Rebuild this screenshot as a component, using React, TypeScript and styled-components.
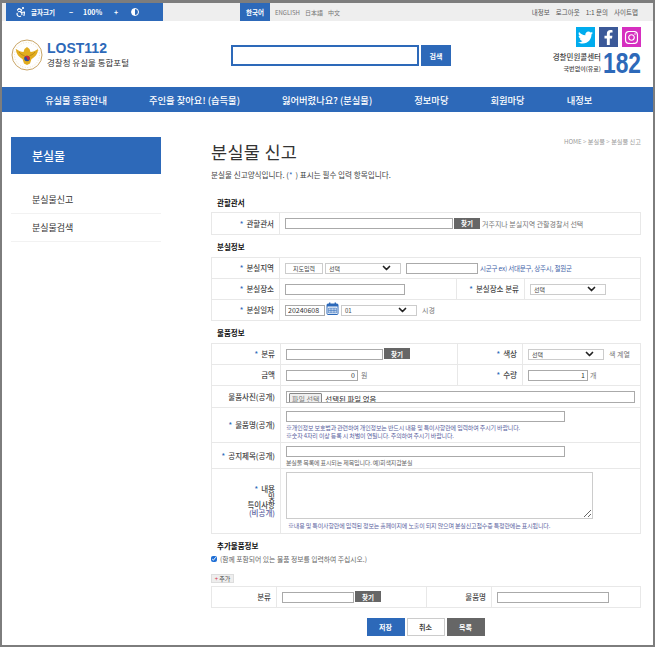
import React from "react";
import styled, { createGlobalStyle } from "styled-components";
import { Accessibility, ChevronDown } from "lucide-react";
import { FaTwitter, FaFacebookF, FaInstagram } from "react-icons/fa";

const GlobalStyle = createGlobalStyle`
  html, body { margin: 0; padding: 0; background: #fff; }
  body {
    font-family: "Noto Sans CJK KR", "Noto Sans", sans-serif;
    font-size: 7.5px;
    color: #333;
  }
  * { box-sizing: border-box; }
`;

const Frame = styled.div`
  width: 655px;
  height: 647px;
  overflow: hidden;
  border: solid #7d7d7d;
  border-width: 3px 2px 2px 2px;
  background: #fff;
`;

const TopBar = styled.div`
  height: 18px;
  background: #eeeeee;
  display: flex;
  align-items: center;
  padding-left: 4px;
`;

const ZoomBox = styled.div`
  width: 157px;
  height: 18px;
  background: #2d69b9;
  color: #fff;
  font-weight: 700;
  display: flex;
  align-items: center;
  padding-left: 9px;
  font-size: 7px;
`;

const ZoomLabel = styled.span`
  margin-left: 4px;
  width: 38px;
  font-size: 6.5px;
  white-space: nowrap;
`;

const ZoomCtl = styled.span<{ $w: number }>`
  width: ${(p) => p.$w}px;
  white-space: nowrap;
`;

const ContrastDot = styled.span`
  width: 8px;
  height: 8px;
  border-radius: 50%;
  border: 1px solid #fff;
  background: linear-gradient(90deg, #fff 50%, transparent 50%);
`;

const LangActive = styled.span`
  margin-left: 77px;
  width: 30px;
  height: 18px;
  background: #2d69b9;
  color: #fff;
  font-weight: 700;
  font-size: 6.5px;
  display: flex;
  align-items: center;
  justify-content: center;
`;

const Lang = styled.span<{ $l: number }>`
  margin-left: ${(p) => p.$l}px;
  color: #777;
  font-size: 6px;
  white-space: nowrap;
`;

const UtilLinks = styled.div`
  margin-left: auto;
  margin-right: 15px;
  display: flex;
  gap: 6px;
  color: #555;
  font-size: 6.5px;
`;

const Header = styled.header`
  height: 66px;
  display: flex;
  padding-left: 9px;
`;

const Logo = styled.div`
  display: flex;
  width: 220px;
  padding-top: 18px;
`;

const LogoText = styled.div`
  margin-left: 4px;
  margin-top: 2px;
`;

const LogoTitle = styled.div`
  font-family: "Liberation Sans", sans-serif;
  font-size: 14px;
  line-height: 15px;
  font-weight: 700;
  color: #2d69b9;
`;

const LogoSub = styled.div`
  font-size: 8.5px;
  line-height: 12px;
  color: #333;
  white-space: nowrap;
`;

const SearchArea = styled.div`
  display: flex;
  margin-top: 24px;
  height: 21px;
  gap: 2px;
`;

const SearchInput = styled.input`
  width: 188px;
  height: 21px;
  border: 2px solid #2d69b9;
  background: #fff;
`;

const SearchBtn = styled.button`
  width: 30px;
  height: 21px;
  background: #2d69b9;
  color: #fff;
  border: 0;
  padding: 0;
  font: 700 7px "Noto Sans CJK KR", sans-serif;
`;

const CallArea = styled.div`
  margin-left: auto;
  margin-right: 12px;
  padding-top: 6px;
  display: flex;
  flex-direction: column;
  align-items: flex-end;
`;

const Sns = styled.div`
  display: flex;
  gap: 4px;
`;

const SnsIcon = styled.span<{ $bg: string }>`
  width: 19px;
  height: 20px;
  background: ${(p) => p.$bg};
  color: #fff;
  display: flex;
  align-items: center;
  justify-content: center;
  font-size: 15px;
`;

const CallRow = styled.div`
  display: flex;
  align-items: center;
  margin-top: 3px;
  gap: 2px;
`;

const CallText = styled.div`
  text-align: right;
  font-weight: 500;
  color: #444;
`;

const CallLine = styled.div<{ $s: number }>`
  font-size: ${(p) => p.$s}px;
  line-height: 11.5px;
  white-space: nowrap;
`;

const CallNum = styled.div`
  width: 38px;
  font-family: "Liberation Sans", sans-serif;
  font-weight: 700;
  font-size: 30px;
  line-height: 25px;
  color: #2d69b9;
  transform: scaleX(0.76);
  transform-origin: left center;
`;

const Nav = styled.nav`
  height: 25px;
  background: #2d69b9;
  color: #fff;
  display: flex;
  align-items: center;
  gap: 42px;
  padding-left: 43px;
  font-size: 9.3px;
  font-weight: 500;
  white-space: nowrap;
`;

const Body = styled.div`
  display: flex;
`;

const Side = styled.aside`
  width: 150px;
  margin: 25px 0 0 9px;
`;

const SideTitle = styled.div`
  height: 37px;
  margin-bottom: 12px;
  background: #2d69b9;
  color: #fff;
  font-size: 12px;
  font-weight: 500;
  display: flex;
  align-items: center;
  padding-left: 21px;
`;

const SideItem = styled.div`
  height: 28px;
  border-bottom: 1px solid #f2f2f2;
  font-size: 9px;
  color: #333;
  display: flex;
  align-items: center;
  padding-left: 21px;
`;

const Main = styled.main`
  width: 430px;
  margin-left: 50px;
`;

const TitleRow = styled.div`
  display: flex;
  justify-content: space-between;
  height: 55px;
  padding-top: 28px;
`;

const PageTitle = styled.h1`
  margin: 0;
  font-size: 17.5px;
  line-height: 24px;
  font-weight: 400;
  color: #333;
  letter-spacing: 0.3px;
`;

const Crumb = styled.div`
  color: #999;
  font-size: 6.2px;
  margin-top: -3px;
  white-space: nowrap;
`;

const Desc = styled.p`
  margin: 0;
  height: 26px;
  padding-top: 2px;
  font-size: 7.6px;
  line-height: 12px;
  color: #444;
`;

const SectionTitle = styled.h2<{ $h: number; $pt?: number }>`
  margin: 0;
  height: ${(p) => p.$h}px;
  padding: ${(p) => p.$pt ?? 0}px 0 0 6px;
  display: flex;
  align-items: center;
  font-size: 7.5px;
  font-weight: 700;
  color: #111;
`;

const FormTable = styled.table`
  width: 430px;
  table-layout: fixed;
  border-collapse: collapse;
  border: 1px solid #e8e8e8;
`;

const Row = styled.tr<{ $h?: number }>`
  height: ${(p) => p.$h ?? 21}px;
`;

const Th = styled.th`
  border: 1px solid #e8e8e8;
  font-weight: 500;
  font-size: 7.5px;
  line-height: 8px;
  text-align: right;
  padding: 0 5px 0 0;
  color: #444;
`;

const Td = styled.td`
  border: 1px solid #e8e8e8;
  padding: 0 0 0 5px;
  vertical-align: middle;
`;

const Req = styled.span`
  color: #2d69b9;
  margin-right: 3px;
`;

const Inline = styled.div`
  display: flex;
  align-items: center;
`;

const TextInput = styled.input<{ $w: number; $right?: boolean }>`
  width: ${(p) => p.$w}px;
  height: 11px;
  border: 1px solid #aaaaaa;
  background: #fff;
  padding: 0 2px;
  font: 7px "Noto Sans CJK KR", sans-serif;
  color: #333;
  text-align: ${(p) => (p.$right ? "right" : "left")};
  flex: none;
`;

const FindBtn = styled.button`
  width: 26px;
  height: 11px;
  margin: -1px 2px 0 1px;
  background: #666;
  color: #fff;
  border: 0;
  padding: 0;
  font: 700 6.5px "Noto Sans CJK KR", sans-serif;
  flex: none;
`;

const GrayNote = styled.span<{ $l?: number }>`
  margin-left: ${(p) => p.$l ?? 0}px;
  color: #777;
  font-size: 7px;
  white-space: nowrap;
`;

const BlueNote = styled.span`
  margin-left: 2px;
  color: #3f64a8;
  font-size: 6.5px;
  white-space: nowrap;
  letter-spacing: -0.2px;
`;

const MapBtn = styled.button`
  width: 38px;
  height: 11px;
  background: #fff;
  border: 1px solid #ccc;
  padding: 0;
  margin-right: 2px;
  font: 6px "Noto Sans CJK KR", sans-serif;
  color: #444;
  flex: none;
`;

const FakeSelect = styled.div<{ $l?: number }>`
  width: 76px;
  height: 11px;
  margin-left: ${(p) => p.$l ?? 0}px;
  margin-right: 5px;
  border: 1px solid #ccc;
  display: flex;
  align-items: center;
  justify-content: space-between;
  padding: 0 6px 0 3px;
  font-size: 6px;
  color: #444;
  flex: none;
  svg { width: 15px; height: 12px; stroke-width: 3.4; color: #222; }
`;

const FileBox = styled.div`
  width: 349px;
  height: 12px;
  border: 1px solid #aaa;
  overflow: hidden;
  display: flex;
  align-items: flex-start;
  padding: 1px 0 0 2px;
  font-size: 7.4px;
  line-height: 12px;
  color: #222;
`;

const FileBtn = styled.span`
  height: 12px;
  padding: 0 2px;
  margin-right: 3px;
  background: #efefef;
  border: 1px solid #888;
  border-radius: 1px;
  color: #777;
  font-size: 7px;
  line-height: 10px;
  white-space: nowrap;
`;

const Hint = styled.div<{ $blue?: boolean; $l?: number }>`
  color: ${(p) => (p.$blue ? "#5a62a0" : "#666")};
  font-size: 6px;
  line-height: 8px;
  padding-left: ${(p) => p.$l ?? 0}px;
  white-space: nowrap;
  letter-spacing: -0.15px;
`;

const StackCell = styled.div`
  padding-top: 1px;
  input { display: block; margin-bottom: 2px; }
`;

const TextArea = styled.textarea`
  display: block;
  width: 307px;
  height: 47px;
  border: 1px solid #ccc;
  margin: 0 0 3px;
  padding: 0;
`;

const Public = styled.span`
  color: #5a62a0;
`;

const CheckRow = styled.label`
  display: flex;
  align-items: center;
  height: 12px;
  margin-top: 1px;
  color: #666;
  font-size: 6.8px;
  input { margin: 0 3px 0 0; width: 6px; height: 6px; accent-color: #1f6fd6; }
`;

const AddBtn = styled.button`
  display: block;
  margin: 9px 0 3px;
  height: 9px;
  width: 23px;
  padding: 0;
  background: #eee;
  border: 1px solid #ddd;
  font: 6px "Noto Sans CJK KR", sans-serif;
  line-height: 7px;
  color: #444;
  span { color: #d8344a; }
`;

const Actions = styled.div`
  display: flex;
  justify-content: center;
  gap: 2px;
  margin-top: 10px;
  padding-right: 1px;
`;

const ActionBtn = styled.button<{ $kind: "blue" | "white" | "gray" }>`
  width: 38px;
  height: 18px;
  padding: 0;
  border: ${(p) => (p.$kind === "white" ? "1px solid #ccc" : "0")};
  background: ${(p) =>
    p.$kind === "blue" ? "#2d69b9" : p.$kind === "gray" ? "#666" : "#fff"};
  color: ${(p) => (p.$kind === "white" ? "#444" : "#fff")};
  font: 700 7px "Noto Sans CJK KR", sans-serif;
`;

const Emblem = () => (
  <svg width="32" height="32" viewBox="0 0 32 32">
    <circle cx="16" cy="16" r="15" fill="#fff" stroke="#c9a566" strokeWidth="1" />
    <circle cx="16" cy="16" r="12.5" fill="none" stroke="#e3cfa3" strokeWidth="0.6" strokeDasharray="1 1.6" />
    <path d="M5 10 C8 12 10 13 12.5 13 L13.5 10 L16 8 L18.5 10 L19.5 13 C22 13 24 12 27 10 C27 15 24 18 20.5 20 L19 24.5 L16 26 L13 24.5 L11.5 20 C8 18 5 15 5 10Z" fill="#e2ad1e" />
    <path d="M8 13 C10 15.5 12 16.5 13.5 16.5 M24 13 C22 15.5 20 16.5 18.5 16.5" stroke="#a87b12" strokeWidth="0.7" fill="none" />
    <circle cx="16" cy="19.5" r="2.8" fill="#2b4fa0" />
    <path d="M13.2 19.5 a2.8 2.8 0 0 1 5.6 0 a1.4 1.4 0 0 1 -2.8 0 a1.4 1.4 0 0 0 -2.8 0Z" fill="#cf2b36" />
  </svg>
);

const CalendarIcon = () => (
  <svg width="13" height="13" viewBox="0 0 13 13" style={{ margin: "-3px 2px 0 1px", flex: "none" }}>
    <rect x="1" y="2" width="11" height="10.5" rx="1" fill="#fff" stroke="#2d69b9" />
    <rect x="1" y="2" width="11" height="2.5" fill="#2d69b9" />
    <rect x="3" y="0.5" width="1.4" height="3" fill="#2d69b9" />
    <rect x="8.6" y="0.5" width="1.4" height="3" fill="#2d69b9" />
    <path d="M2.5 6h8v5h-8z M2.5 8.5h8 M5 6v5 M8 6v5" fill="#bcd0ea" stroke="#2d69b9" strokeWidth="0.5" />
  </svg>
);

const Select = ({ l }: { l?: number }) => (
  <FakeSelect $l={l}>
    선택
    <ChevronDown />
  </FakeSelect>
);

export default function App() {
  return (
    <Frame>
      <GlobalStyle />
      <TopBar>
        <ZoomBox>
          <Accessibility size={12} strokeWidth={2.4} />
          <ZoomLabel>글자크기</ZoomLabel>
          <ZoomCtl $w={14}>−</ZoomCtl>
          <ZoomCtl $w={31}>100%</ZoomCtl>
          <ZoomCtl $w={17}>+</ZoomCtl>
          <ContrastDot />
        </ZoomBox>
        <LangActive>한국어</LangActive>
        <Lang $l={5}>ENGLISH</Lang>
        <Lang $l={5}>日本語</Lang>
        <Lang $l={5}>中文</Lang>
        <UtilLinks>
          <span>내정보</span>
          <span>로그아웃</span>
          <span>1:1 문의</span>
          <span>사이트맵</span>
        </UtilLinks>
      </TopBar>

      <Header>
        <Logo>
          <Emblem />
          <LogoText>
            <LogoTitle>LOST112</LogoTitle>
            <LogoSub>경찰청 유실물 통합포털</LogoSub>
          </LogoText>
        </Logo>
        <SearchArea>
          <SearchInput />
          <SearchBtn>검색</SearchBtn>
        </SearchArea>
        <CallArea>
          <Sns>
            <SnsIcon $bg="#00acee"><FaTwitter /></SnsIcon>
            <SnsIcon $bg="#3b5998"><FaFacebookF /></SnsIcon>
            <SnsIcon $bg="#d62fc0"><FaInstagram /></SnsIcon>
          </Sns>
          <CallRow>
            <CallText>
              <CallLine $s={7.5}>경찰민원콜센터</CallLine>
              <CallLine $s={6}>국번없이(유료)</CallLine>
            </CallText>
            <CallNum>182</CallNum>
          </CallRow>
        </CallArea>
      </Header>

      <Nav>
        <span>유실물 종합안내</span>
        <span>주인을 찾아요! (습득물)</span>
        <span>잃어버렸나요? (분실물)</span>
        <span>정보마당</span>
        <span>회원마당</span>
        <span>내정보</span>
      </Nav>

      <Body>
        <Side>
          <SideTitle>분실물</SideTitle>
          <SideItem>분실물신고</SideItem>
          <SideItem>분실물검색</SideItem>
        </Side>

        <Main>
          <TitleRow>
            <PageTitle>분실물 신고</PageTitle>
            <Crumb>HOME &gt; 분실물 &gt; 분실물 신고</Crumb>
          </TitleRow>
          <Desc>분실물 신고양식입니다. (<Req as="span">*</Req>) 표시는 필수 입력 항목입니다.</Desc>

          <SectionTitle $h={19}>관할관서</SectionTitle>
          <FormTable>
            <colgroup>
              <col width={68} />
              <col />
            </colgroup>
            <tbody>
              <Row $h={22}>
                <Th><Req>*</Req>관할관서</Th>
                <Td>
                  <Inline>
                    <TextInput $w={168} />
                    <FindBtn>찾기</FindBtn>
                    <GrayNote>거주지나 분실지역 관할경찰서 선택</GrayNote>
                  </Inline>
                </Td>
              </Row>
            </tbody>
          </FormTable>

          <SectionTitle $h={22}>분실정보</SectionTitle>
          <FormTable>
            <colgroup>
              <col width={68} />
              <col width={177} />
              <col width={68} />
              <col />
            </colgroup>
            <tbody>
              <Row>
                <Th><Req>*</Req>분실지역</Th>
                <Td colSpan={3}>
                  <Inline>
                    <MapBtn>지도입력</MapBtn>
                    <Select />
                    <TextInput $w={72} />
                    <BlueNote>시군구 ex) 서대문구, 상주시, 철원군</BlueNote>
                  </Inline>
                </Td>
              </Row>
              <Row>
                <Th><Req>*</Req>분실장소</Th>
                <Td><TextInput $w={120} /></Td>
                <Th><Req>*</Req>분실장소 분류</Th>
                <Td><Select /></Td>
              </Row>
              <Row>
                <Th><Req>*</Req>분실일자</Th>
                <Td colSpan={3}>
                  <Inline>
                    <TextInput $w={40} defaultValue="20240608" />
                    <CalendarIcon />
                    <FakeSelect>
                      01
                      <ChevronDown />
                    </FakeSelect>
                    <GrayNote>시경</GrayNote>
                  </Inline>
                </Td>
              </Row>
            </tbody>
          </FormTable>

          <SectionTitle $h={22}>물품정보</SectionTitle>
          <FormTable>
            <colgroup>
              <col width={69} />
              <col width={177} />
              <col width={65} />
              <col />
            </colgroup>
            <tbody>
              <Row>
                <Th><Req>*</Req>분류</Th>
                <Td>
                  <Inline>
                    <TextInput $w={97} />
                    <FindBtn>찾기</FindBtn>
                  </Inline>
                </Td>
                <Th><Req>*</Req>색상</Th>
                <Td>
                  <Inline>
                    <Select />
                    <GrayNote>색 계열</GrayNote>
                  </Inline>
                </Td>
              </Row>
              <Row>
                <Th>금액</Th>
                <Td>
                  <Inline>
                    <TextInput $w={72} $right defaultValue="0" />
                    <GrayNote $l={3}>원</GrayNote>
                  </Inline>
                </Td>
                <Th><Req>*</Req>수량</Th>
                <Td>
                  <Inline>
                    <TextInput $w={60} $right defaultValue="1" />
                    <GrayNote $l={2}>개</GrayNote>
                  </Inline>
                </Td>
              </Row>
              <Row $h={22}>
                <Th>물품사진(공개)</Th>
                <Td colSpan={3}>
                  <FileBox>
                    <FileBtn>파일 선택</FileBtn>
                    선택된 파일 없음
                  </FileBox>
                </Td>
              </Row>
              <Row $h={35}>
                <Th><Req>*</Req>물품명(공개)</Th>
                <Td colSpan={3}>
                  <StackCell>
                    <TextInput $w={279} />
                    <Hint $blue>※개인정보 보호법과 관련하여 개인정보는 반드시 내용 및 특이사항란에 입력하여 주시기 바랍니다.</Hint>
                    <Hint $blue>※숫자 4자리 이상 등록 시 처벌이 연될니다. 주의하여 주시기 바랍니다.</Hint>
                  </StackCell>
                </Td>
              </Row>
              <Row $h={26}>
                <Th><Req>*</Req>공지제목(공개)</Th>
                <Td colSpan={3}>
                  <StackCell>
                    <TextInput $w={279} />
                    <Hint>분실물 목록에 표시되는 제목입니다. 예)회색지갑분실</Hint>
                  </StackCell>
                </Td>
              </Row>
              <Row $h={65}>
                <Th>
                  <Req>*</Req>내용
                  <br />및
                  <br />특이사항
                  <br /><Public>(비공개)</Public>
                </Th>
                <Td colSpan={3}>
                  <TextArea />
                  <Hint $blue $l={2}>※내용 및 특이사항란에 입력된 정보는 홈페이지에 노출이 되지 않으며 분실신고접수증 특정란에는 표시됩니다.</Hint>
                </Td>
              </Row>
            </tbody>
          </FormTable>

          <SectionTitle $h={18} $pt={4}>추가물품정보</SectionTitle>
          <CheckRow>
            <input type="checkbox" defaultChecked />
            (함께 포함되어 있는 물품 정보를 입력하여 주십시오.)
          </CheckRow>
          <AddBtn><span>+</span> 추가</AddBtn>
          <FormTable>
            <colgroup>
              <col width={65} />
              <col width={150} />
              <col width={65} />
              <col />
            </colgroup>
            <tbody>
              <Row>
                <Th>분류</Th>
                <Td>
                  <Inline>
                    <TextInput $w={72} />
                    <FindBtn>찾기</FindBtn>
                  </Inline>
                </Td>
                <Th>물품명</Th>
                <Td><TextInput $w={112} /></Td>
              </Row>
            </tbody>
          </FormTable>

          <Actions>
            <ActionBtn $kind="blue">저장</ActionBtn>
            <ActionBtn $kind="white">취소</ActionBtn>
            <ActionBtn $kind="gray">목록</ActionBtn>
          </Actions>
        </Main>
      </Body>
    </Frame>
  );
}
